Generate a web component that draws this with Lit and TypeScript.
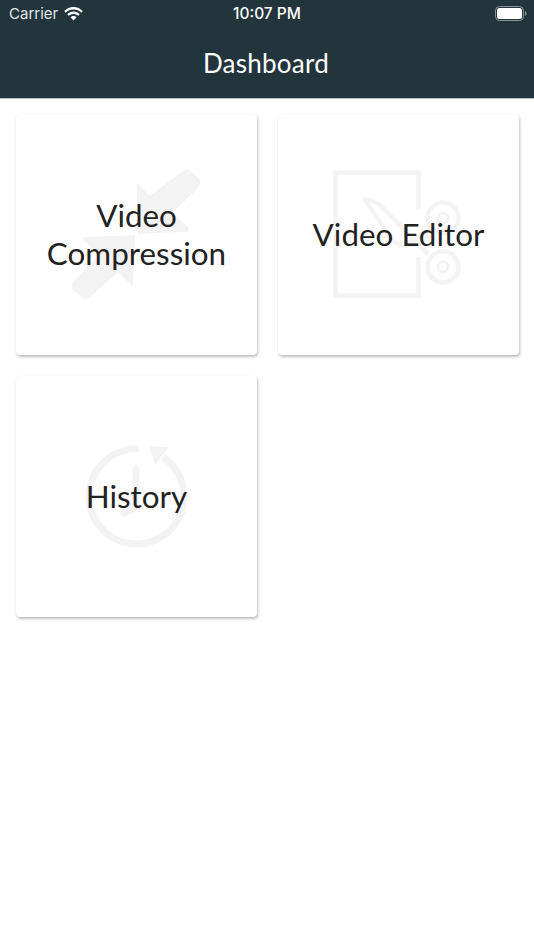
import { css, html, LitElement, svg } from "lit";
import { customElement } from "lit/decorators.js";

// icons are drawn in page coordinates, each viewBox is the card's own box
const compressIcon = svg`
  <svg class="icon" viewBox="16 114 241 241">
    <path d="M137 183 L150 196 L183 171 Q188 168 192 172 L198 178 Q202 183 198 188 L172 213 L188 227 Q190 232 184 232 L137 234 Z" />
    <path d="M85 237 L135 235 L133 287 L118 272 L90 297 Q85 300 81 297 L74 291 Q70 286 74 281 L100 254 L84 241 Q82 237 85 237 Z" />
  </svg>
`;

const editorIcon = svg`
  <svg class="icon" viewBox="278 114 241 241">
    <g fill="none" stroke-width="4.500">
      <path d="M418.500 209 V172.500 H335.500 V295.500 H418.500 V257" />
      <path d="M364 198 L379 204 L428 254 M364 198 L388 234 Q393 245 404 245 H418" />
      <path d="M408 243 L430 229" />
      <circle cx="443" cy="218" r="15.500" />
      <circle cx="443" cy="218" r="5" stroke-width="3" />
      <circle cx="443" cy="267" r="15.500" />
      <circle cx="443" cy="267" r="5" stroke-width="3" />
    </g>
  </svg>
`;

const historyIcon = svg`
  <svg class="icon" viewBox="16 376 241 241">
    <g fill="none" stroke-width="7">
      <path d="M139 449 A47.500 47.500 0 1 0 163 457" />
      <path d="M136 469 V507 L124 513" stroke-linecap="round" />
    </g>
    <path d="M149 446 L169 447 L155 465 Z" />
  </svg>
`;

@customElement("app-root")
export class AppRoot extends LitElement {
  static styles = css`
    :host {
      display: block;
      min-height: 950px;
      background: #ffffff;
      font-family: Lato, "Open Sans", sans-serif;
      color: #222222;
    }

    .top {
      height: 98px;
      background: #22343c;
      border-bottom: 1px solid #b3bec4;
      color: #ffffff;
      display: flex;
      flex-direction: column;
    }

    .status {
      display: grid;
      grid-template-columns: 1fr auto 1fr;
      align-items: center;
      height: 27px;
      padding: 0 7px 0 9px;
      font-family: Inter, Roboto, sans-serif;
      font-size: 15px;
    }

    .carrier {
      display: flex;
      align-items: center;
      gap: 6px;
      color: #e4e7e8;
    }

    .time {
      font-weight: 500;
      font-size: 15.500px;
      margin-left: -2px;
    }

    .battery {
      justify-self: end;
    }

    .title {
      margin: 0;
      flex: 1;
      display: flex;
      align-items: center;
      justify-content: center;
      padding-right: 2px;
      font-size: 26px;
      font-weight: 400;
      letter-spacing: 0.25px;
    }

    .grid {
      display: grid;
      grid-template-columns: 241px 241px;
      grid-auto-rows: 241px;
      gap: 21px;
      padding: 15px 15px 16px 16px;
    }

    .card {
      display: grid;
      place-items: center;
      background: #ffffff;
      border-radius: 4px;
      box-shadow: 1px 2px 3px rgba(0, 0, 0, 0.25), 0 0 1px rgba(0, 0, 0, 0.08);
    }

    .card > * {
      grid-area: 1 / 1;
    }

    .icon {
      width: 241px;
      height: 241px;
      fill: #f3f3f3;
      stroke: #f3f3f3;
      stroke-width: 0;
    }

    .label {
      position: relative;
      font-size: 31.400px;
      line-height: 37.500px;
      text-align: center;
      padding: 0 24px;
    }
  `;

  cards = [
    { label: "Video Compression", icon: compressIcon },
    { label: "Video Editor", icon: editorIcon },
    { label: "History", icon: historyIcon },
  ];

  render() {
    return html`
      <header class="top">
        <div class="status">
          <div class="carrier">
            Carrier
            <svg width="19" height="14" viewBox="0 0 19 14">
              <path fill="#fff" d="M9.500 2.500 C12.500 2.500 15.300 3.700 17.300 5.700 L18.800 4.100 C16.400 1.600 13.100 0 9.500 0 C5.900 0 2.600 1.600 0.200 4.100 L1.700 5.700 C3.700 3.700 6.500 2.500 9.500 2.500 Z M9.500 6.900 C11.300 6.900 12.900 7.600 14.200 8.800 L15.700 7.200 C14.100 5.600 11.900 4.600 9.500 4.600 C7.100 4.600 4.900 5.600 3.300 7.200 L4.800 8.800 C6.100 7.600 7.700 6.900 9.500 6.900 Z M9.500 9 C8.300 9 7.300 9.500 6.400 10.300 L9.500 13.600 L12.600 10.300 C11.700 9.500 10.700 9 9.500 9 Z" />
            </svg>
          </div>
          <div class="time">10:07 PM</div>
          <svg class="battery" width="32" height="15" viewBox="0 0 32 15">
            <rect x="0.500" y="0.500" width="28" height="14" rx="4" fill="none" stroke="#8b9599" />
            <rect x="2" y="2" width="25" height="11" rx="2.500" fill="#fff" />
            <path d="M30 5 C31 5.400 31.500 6.300 31.500 7.500 C31.500 8.700 31 9.600 30 10 Z" fill="#8b9599" />
          </svg>
        </div>
        <h1 class="title">Dashboard</h1>
      </header>
      <main class="grid">
        ${this.cards.map(
          (c) => html`
            <div class="card">
              ${c.icon}
              <div class="label">${c.label}</div>
            </div>
          `
        )}
      </main>
    `;
  }
}
